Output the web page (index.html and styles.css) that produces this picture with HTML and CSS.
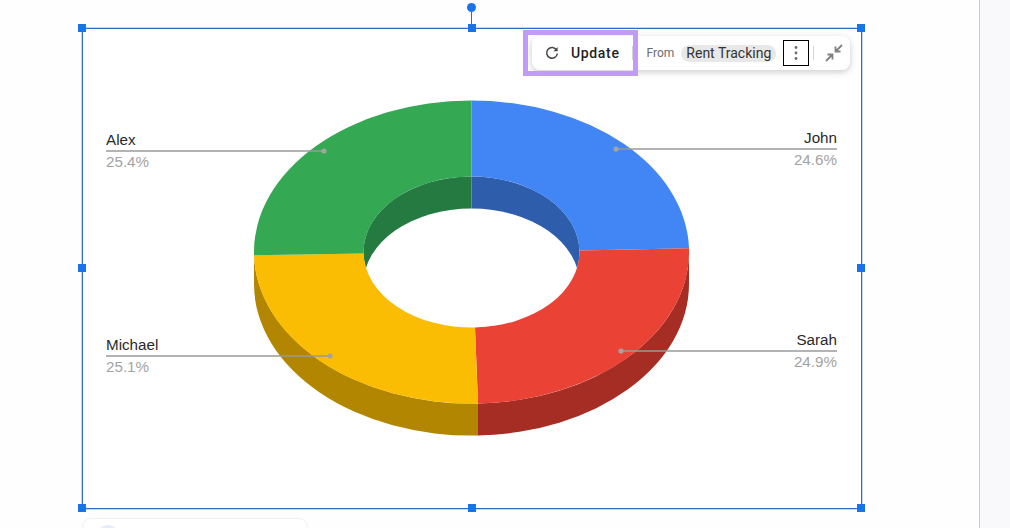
FILE: index.html
```html
<!DOCTYPE html>
<html lang="en">
<head>
<meta charset="utf-8">
<title>Rent Tracking chart</title>
<link rel="stylesheet" href="styles.css">
</head>
<body>
<div class="page">
  <main class="canvas">
    <div class="frame">
      <svg class="chart" viewBox="83 28.500 778 479" width="778" height="479" aria-label="Donut chart">
        <path class="wall-red" d="M689 251.5A217.5 151.5 0 0 1 478 403L478 435A217.5 151.5 0 0 0 689 283.5Z"/>
        <path class="wall-yellow" d="M478 403A217.5 151.5 0 0 1 254 251.5L254 283.5A217.5 151.5 0 0 0 478 435Z"/>
        <path class="inner-green" d="M471.5 176A108 75.5 0 0 0 471.5 327Z"/>
        <path class="inner-blue" d="M471.5 176A108 75.5 0 0 1 471.5 327Z"/>
        <ellipse class="hole" cx="471.5" cy="283.5" rx="108" ry="75.5"/>
        <path class="slice-blue" d="M471.5 100A217.5 151.5 0 0 1 689 247.7L579.4 250A108 75.5 0 0 0 471.5 176Z"/>
        <path class="slice-red" d="M689 247.7A217.5 151.5 0 0 1 478 403L475 327A108 75.5 0 0 0 579.4 250Z"/>
        <path class="slice-yellow" d="M478 403A217.5 151.5 0 0 1 254 254.7L363.6 253A108 75.5 0 0 0 475 327Z"/>
        <path class="slice-green" d="M254 254.7A217.5 151.5 0 0 1 471.5 100L471.5 176A108 75.5 0 0 0 363.6 253Z"/>
        <g class="leaders">
          <path d="M106 150.500H324"/>
          <path d="M616 148.500H837"/>
          <path d="M106 355.500H330"/>
          <path d="M621 350.500H837"/>
        </g>
        <g class="dots">
          <circle cx="324" cy="150.500" r="2.6"/>
          <circle cx="616" cy="148.500" r="2.6"/>
          <circle cx="330" cy="355.500" r="2.6"/>
          <circle cx="621" cy="350.500" r="2.6"/>
        </g>
        <text class="name" x="106" y="144.500">Alex</text>
        <text class="pct" x="106" y="166.500">25.4%</text>
        <text class="name end" x="837" y="142.500">John</text>
        <text class="pct end" x="837" y="164.500">24.6%</text>
        <text class="name" x="106" y="349.500">Michael</text>
        <text class="pct" x="106" y="371.500">25.1%</text>
        <text class="name end" x="837" y="344.500">Sarah</text>
        <text class="pct end" x="837" y="366.500">24.9%</text>
      </svg>

      <span class="rotate-stem"></span>
      <span class="rotate-knob"></span>
      <span class="handle h-tl"></span>
      <span class="handle h-tc"></span>
      <span class="handle h-tr"></span>
      <span class="handle h-ml"></span>
      <span class="handle h-mr"></span>
      <span class="handle h-bl"></span>
      <span class="handle h-bc"></span>
      <span class="handle h-br"></span>

      <div class="toolbar">
        <svg class="icon-refresh" viewBox="0 0 14 14" width="14" height="14" aria-hidden="true">
          <path d="M11.6 4.2A5.3 5.3 0 1 0 12.300 7.500"/>
          <path class="solid" d="M12.600 1V5.200H8.400Z"/>
        </svg>
        <span class="update">Update</span>
        <span class="sep sep-a"></span>
        <span class="from">From</span>
        <span class="chip">Rent Tracking</span>
        <span class="more">
          <svg viewBox="0 0 4 14" width="4" height="14" aria-hidden="true">
            <circle cx="2" cy="1.500" r="1.400"/>
            <circle cx="2" cy="7" r="1.400"/>
            <circle cx="2" cy="12.500" r="1.400"/>
          </svg>
        </span>
        <span class="sep sep-b"></span>
        <svg class="icon-collapse" viewBox="0 0 18 18" width="18" height="18" aria-hidden="true">
          <path d="M17 1L10.500 7.500M10.500 2.500V7.500H15.500"/>
          <path d="M1 17L7.500 10.500M2.500 10.500H7.500V15.500"/>
        </svg>
      </div>
      <div class="highlight"></div>
    </div>
    <div class="next-card"><span class="avatar"></span></div>
  </main>
  <aside class="sidebar"></aside>
</div>
</body>
</html>
```

FILE: styles.css
```css
* { box-sizing: border-box; }
html, body { margin: 0; height: 100%; }
body { background: #fefefe; overflow: hidden; font-family: Roboto, "Liberation Sans", sans-serif; }

.page { display: flex; width: 1010px; height: 528px; overflow: hidden; }
.canvas { flex: 1; padding: 28px 0 0 82px; overflow: hidden; background: #fefefe; }
.sidebar { width: 31px; background: #f9f9fb; border-left: 1px solid #c9c9c9; }

.frame {
  position: relative; width: 780px; height: 481px;
  border: 1px solid #2a70c6;
  box-shadow: 0 0 0 .5px rgba(42, 112, 198, .55);
}
.chart { display: block; position: absolute; left: 0; top: 0; background: #fff; }

.wall-red { fill: #a52d24; }
.wall-yellow { fill: #b28600; }
.inner-green { fill: #247a41; }
.inner-blue { fill: #2e5dab; }
.hole { fill: #fff; }
.slice-blue { fill: #4285f4; }
.slice-red { fill: #ea4335; }
.slice-yellow { fill: #fbbc04; }
.slice-green { fill: #34a853; }

.leaders path { fill: none; stroke: #9a9a9a; stroke-width: 1.500; }
.dots circle { fill: #a3a3a3; }

.name, .pct { font-family: "Liberation Sans", Arial, sans-serif; font-size: 15.200px; }
.name { fill: #2a2a2a; }
.pct { fill: #a3a3a3; }
.end { text-anchor: end; }

.handle { position: absolute; width: 8px; height: 8px; background: #1a73e8; }
.h-tl { left: -5px; top: -5px; }
.h-tc { left: 385px; top: -5px; }
.h-tr { right: -4px; top: -5px; }
.h-ml { left: -5px; top: 235px; }
.h-mr { right: -4px; top: 235px; }
.h-bl { left: -5px; bottom: -4px; }
.h-bc { left: 385px; bottom: -4px; }
.h-br { right: -4px; bottom: -4px; }
.rotate-stem { position: absolute; left: 388px; top: -21px; width: 1px; height: 20px; background: #2a70c6; }
.rotate-knob { position: absolute; left: 384px; top: -26px; width: 9px; height: 9px; border-radius: 50%; background: #1a73e8; }

.toolbar {
  position: absolute; left: 449px; top: 7px; width: 318px; height: 34px;
  display: flex; align-items: center; padding-left: 13px;
  background: #fff; border-radius: 8px;
  box-shadow: 0 2px 6px rgba(60, 64, 67, .28);
}
.icon-refresh { flex: none; }
.icon-refresh path { fill: none; stroke: #444746; stroke-width: 1.500; }
.icon-refresh .solid { fill: #444746; stroke: none; }
.update { margin-left: 12px; font-size: 14px; font-weight: 500; letter-spacing: .65px; color: #1f1f1f; }
.sep { width: 1px; height: 14px; background: #d5d5d5; flex: none; }
.sep-a { margin-left: 12px; }
.from { margin-left: 14px; font-size: 12px; color: #6a6d70; }
.chip {
  margin-left: 7px; height: 17px; padding: 0 5px; border-radius: 9px;
  background: #e8e8e8; font-size: 14px; line-height: 17px; color: #333;
}
.more {
  margin-left: 7px; width: 26px; height: 26px; flex: none;
  display: flex; align-items: center; justify-content: center;
  border: 1px solid #000;
}
.more circle { fill: #6a6d70; }
.sep-b { margin-left: 4px; }
.icon-collapse { margin-left: 11px; flex: none; }
.icon-collapse path { fill: none; stroke: #808080; stroke-width: 1.800; }

.highlight {
  position: absolute; left: 440px; top: 1px; width: 115px; height: 46px;
  border: 5px solid #c09cf6;
}

.next-card {
  width: 226px; height: 40px; margin-top: 9px; padding: 6px 0 0 13px;
  background: #fff; border: 1px solid #f1f0f2; border-radius: 9px;
}
.avatar { display: block; width: 24px; height: 24px; border-radius: 50%; background: #e6edf8; }
```
